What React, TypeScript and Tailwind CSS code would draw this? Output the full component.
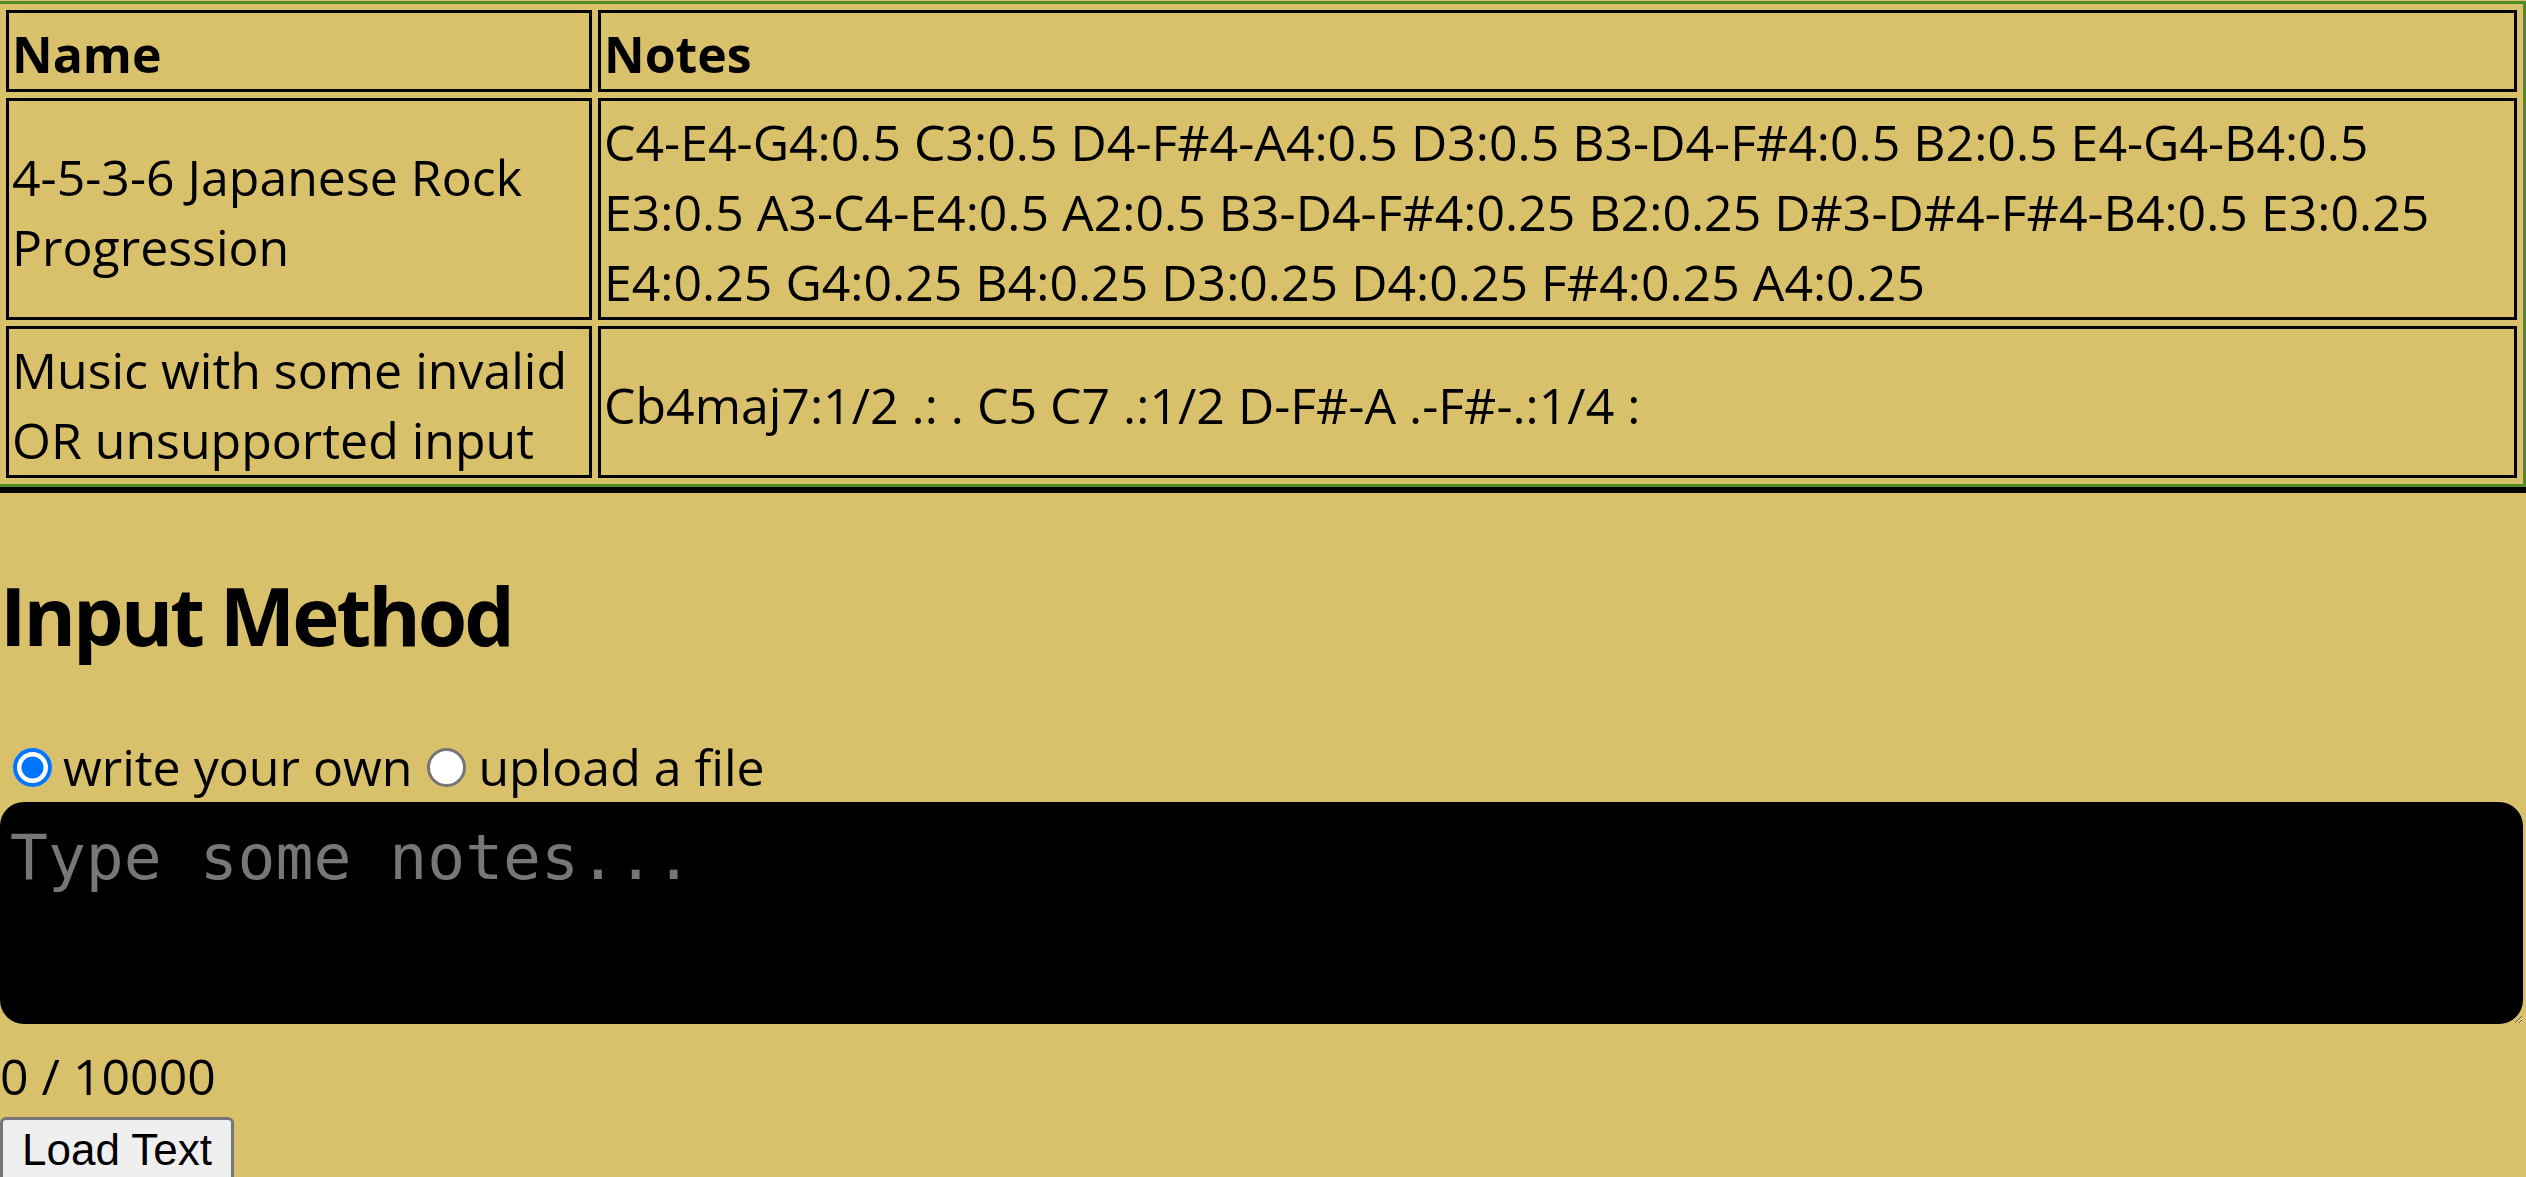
import { useState } from "react";

const rows = [
  {
    name: "4-5-3-6 Japanese Rock Progression",
    notes:
      "C4-E4-G4:0.5 C3:0.5 D4-F#4-A4:0.5 D3:0.5 B3-D4-F#4:0.5 B2:0.5 E4-G4-B4:0.5 E3:0.5 A3-C4-E4:0.5 A2:0.5 B3-D4-F#4:0.25 B2:0.25 D#3-D#4-F#4-B4:0.5 E3:0.25 E4:0.25 G4:0.25 B4:0.25 D3:0.25 D4:0.25 F#4:0.25 A4:0.25",
  },
  {
    name: "Music with some invalid OR unsupported input",
    notes: "Cb4maj7:1/2 .: . C5 C7 .:1/2 D-F#-A .-F#-.:1/4 :",
  },
];

const MAX = 10000;

export default function App() {
  const [mode, setMode] = useState<"write" | "upload">("write");
  const [text, setText] = useState("");

  const radio = (on: boolean) =>
    on
      ? "appearance-none w-[39px] h-[39px] rounded-full bg-[#0075ff] shadow-[inset_0_0_0_4px_#0075ff,inset_0_0_0_8.5px_#ffffff]"
      : "appearance-none w-[39px] h-[39px] rounded-full bg-white border-[3px] border-[#767676]";

  return (
    <div className="min-h-screen bg-[#d9c16c] text-black font-['Open_Sans',sans-serif] text-[50px] leading-[70px]">
      <div className="pt-[1px] border-b-[6px] border-black">
        <table className="w-full border-separate border-spacing-[6px] border-t-[3px] border-r-[3px] border-b-[3px] border-[#4f8a2b]">
          <thead>
            <tr>
              <th className="w-[586px] border-[3px] border-black px-[3px] pt-[6px] pb-0 text-left font-bold">
                Name
              </th>
              <th className="border-[3px] border-black px-[3px] pt-[6px] pb-0 text-left font-bold">
                Notes
              </th>
            </tr>
          </thead>
          <tbody>
            {rows.map((r) => (
              <tr key={r.name}>
                <td className="border-[3px] border-black px-[3px] pt-[6px] pb-0 align-middle">
                  {r.name}
                </td>
                <td className="border-[3px] border-black px-[3px] pt-[6px] pb-0 align-middle">
                  {r.notes}
                </td>
              </tr>
            ))}
          </tbody>
        </table>
      </div>

      <h2 className="mt-[82px] text-[80px] leading-[80px] font-bold tracking-[-3px]">
        Input Method
      </h2>

      <div className="mt-[77px] flex h-[70px] items-center">
        <label className="flex items-center">
          <input
            type="radio"
            name="method"
            className={radio(mode === "write") + " ml-[13px] mr-[11px]"}
            checked={mode === "write"}
            onChange={() => setMode("write")}
          />
          write your own
        </label>
        <label className="flex items-center">
          <input
            type="radio"
            name="method"
            className={radio(mode === "upload") + " ml-[15px] mr-[12px]"}
            checked={mode === "upload"}
            onChange={() => setMode("upload")}
          />
          upload a file
        </label>
      </div>

      <textarea
        value={text}
        maxLength={MAX}
        onChange={(e) => setText(e.target.value)}
        placeholder="Type some notes..."
        className="block w-[calc(100%-3px)] h-[222px] rounded-[24px] bg-black text-white px-[10px] pt-[19px] font-['DejaVu_Sans_Mono',monospace] text-[63px] leading-[73px] placeholder:text-[#777777] outline-none"
      />

      <div className="mt-[17px]">
        {text.length} / {MAX}
      </div>

      <button className="mt-[6px] block rounded-[6px] border-[3px] border-[#767676] bg-[#efefef] px-[19px] py-[5px] font-['Liberation_Sans',Arial,sans-serif] text-[44px] leading-[50px]">
        Load Text
      </button>
    </div>
  );
}
